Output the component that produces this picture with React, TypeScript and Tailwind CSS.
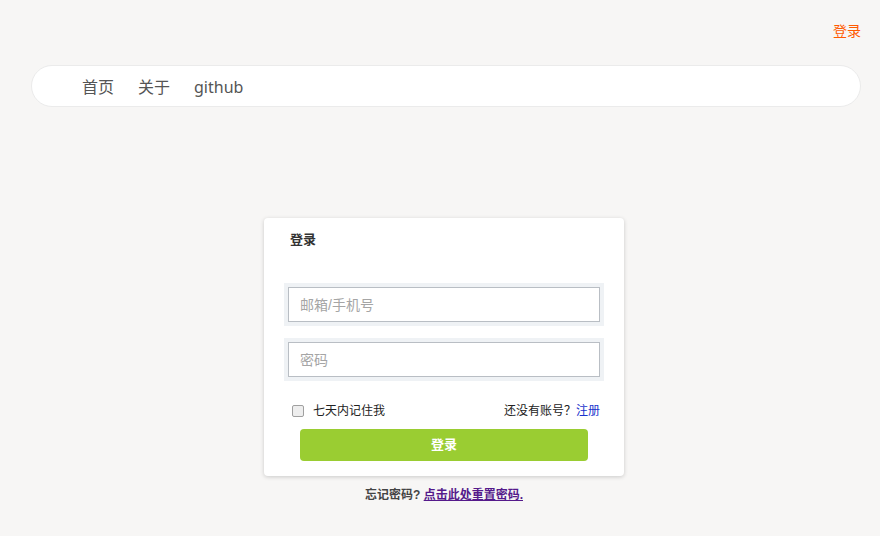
import React from "react";

const font = { fontFamily: '"Liberation Sans", "Noto Sans CJK SC", sans-serif' };

function Field({ placeholder, type = "text" }: { placeholder: string; type?: string }) {
  return (
    <div className="bg-[#eff2f5] p-1">
      <input
        type={type}
        placeholder={placeholder}
        className="block h-[35px] w-full border border-[#b9bec4] bg-white px-[11px] text-[14px] text-[#333] outline-none placeholder:text-[#a5a5a5]"
      />
    </div>
  );
}

export default function App() {
  return (
    <div className="min-h-[536px] w-full bg-[#f7f6f5]" style={font}>
      <div className="flex justify-end px-[19px] pt-[21px]">
        <a className="text-[14px] leading-[20px] text-[#ff5a00]">登录</a>
      </div>
      <div
        className="ml-[31px] mr-[19px] mt-[24px] flex h-[42px] items-center gap-[24px] rounded-full border border-[#ebebeb] bg-white pl-[50px] pt-[2px] text-[16px] text-[#555]"
        style={{ fontFamily: '"Noto Sans", "Noto Sans CJK SC", sans-serif' }}
      >
        <a>首页</a>
        <a>关于</a>
        <a>github</a>
      </div>

      <div className="pl-[8px]">
        <div className="mx-auto mt-[111px] w-[360px] rounded-[4px] bg-white px-5 pb-[15px] pt-[13px] shadow-[0_1px_4px_rgba(0,0,0,0.18)]">
          <h3 className="pl-[6px] text-[13px] font-bold leading-[18px] text-[#333]">登录</h3>
          <div className="mt-[34px] flex flex-col gap-[12px]">
            <Field placeholder="邮箱/手机号" />
            <Field placeholder="密码" type="password" />
          </div>
          <div className="mt-[21px] flex items-center justify-between pl-[8px] pr-[4px] text-[12px] leading-[18px] text-[#222]">
            <label className="flex items-center gap-[9px]">
              <span className="block h-[12px] w-[12px] rounded-[2px] border border-[#a0a0a0] bg-[#eee]" />
              七天内记住我
            </label>
            <span>
              还没有账号？<a className="text-[#1a33cc]">注册</a>
            </span>
          </div>
          <div className="px-4 pt-[9px]">
            <button className="h-[32px] w-full rounded-[4px] bg-[#9acd32] text-[13px] font-bold text-white">
              登录
            </button>
          </div>
        </div>

        <p className="mt-[10px] text-center text-[12px] font-bold leading-[18px] text-[#444]">
          忘记密码? <a className="text-[#551a8b] underline">点击此处重置密码.</a>
        </p>
      </div>
    </div>
  );
}
